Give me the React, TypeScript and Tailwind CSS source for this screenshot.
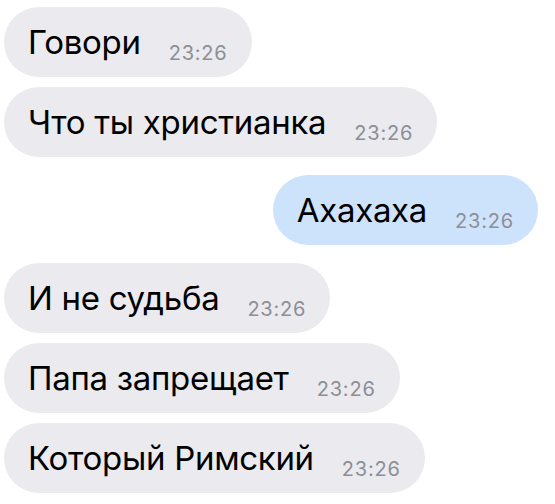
const messages = [
  { text: 'Говори', out: false, gap: 'mt-0' },
  { text: 'Что ты христианка', out: false, gap: 'mt-[10px]' },
  { text: 'Ахахаха', out: true, gap: 'mt-[18px]' },
  { text: 'И не судьба', out: false, gap: 'mt-[18px]' },
  { text: 'Папа запрещает', out: false, gap: 'mt-[10px]' },
  { text: 'Который Римский', out: false, gap: 'mt-[10px]' },
];

export default function App() {
  return (
    <div
      className="w-[555px] h-[504px] bg-white pt-[7px] pl-[4px] pr-[17px] flex flex-col overflow-hidden"
      style={{ fontFamily: 'Inter, "Noto Sans", sans-serif' }}
    >
      {messages.map((m, i) => (
        <Bubble key={i} text={m.text} out={m.out} gap={m.gap} />
      ))}
    </div>
  );
}

function Bubble({ text, out, gap }: { text: string; out: boolean; gap: string }) {
  return (
    <div
      className={`${gap} ${out ? 'self-end bg-[#cde3fc]' : 'self-start bg-[#eaeaef]'} h-[70px] rounded-full pl-[24px] pr-[24px] flex items-center`}
    >
      <span className="text-[33px] leading-none text-black tracking-[-0.3px]">{text}</span>
      <span className="ml-[28px] mt-[22px] text-[20px] leading-none text-[#8c8f96] tracking-[0.8px]">23:26</span>
    </div>
  );
}
